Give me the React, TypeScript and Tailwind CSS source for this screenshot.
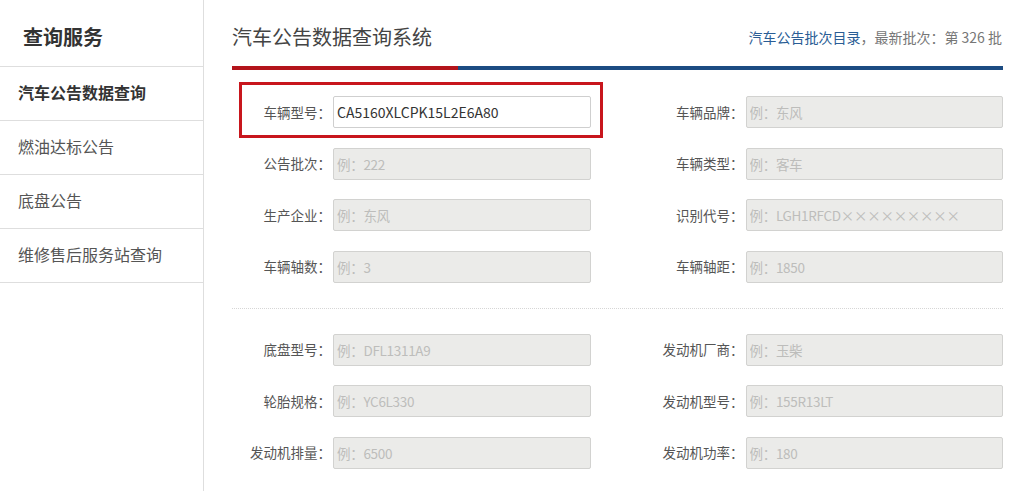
import React from "react";

// Campos do formulário de consulta (label, valor ou exemplo)
interface Field {
  label: string;
  placeholder?: string;
  value?: string;
}

const topFields: Field[] = [
  { label: "车辆型号：", value: "CA5160XLCPK15L2E6A80" },
  { label: "车辆品牌：", placeholder: "例：东风" },
  { label: "公告批次：", placeholder: "例：222" },
  { label: "车辆类型：", placeholder: "例：客车" },
  { label: "生产企业：", placeholder: "例：东风" },
  { label: "识别代号：", placeholder: "例：LGH1RFCD×××××××××" },
  { label: "车辆轴数：", placeholder: "例：3" },
  { label: "车辆轴距：", placeholder: "例：1850" },
];

const bottomFields: Field[] = [
  { label: "底盘型号：", placeholder: "例：DFL1311A9" },
  { label: "发动机厂商：", placeholder: "例：玉柴" },
  { label: "轮胎规格：", placeholder: "例：YC6L330" },
  { label: "发动机型号：", placeholder: "例：155R13LT" },
  { label: "发动机排量：", placeholder: "例：6500" },
  { label: "发动机功率：", placeholder: "例：180" },
];

const menu = ["汽车公告数据查询", "燃油达标公告", "底盘公告", "维修售后服务站查询"];

const FieldRow: React.FC<{ field: Field; highlight?: boolean }> = ({ field, highlight }) => (
  <div className="relative flex h-[32px] items-center">
    <label className="w-[101px] shrink-0 pr-[2px] text-right text-[13.5px] text-[#555]">
      {field.label}
    </label>
    {field.value !== undefined ? (
      <input
        readOnly
        value={field.value}
        className="h-[32px] w-full rounded-[2px] border border-[#cfcfcf] bg-white px-[3px] text-[14px] text-[#333] outline-none"
      />
    ) : (
      <input
        readOnly
        placeholder={field.placeholder}
        className="h-[32px] w-full rounded-[2px] border border-[#d2d2d0] bg-[#ebebe9] px-[3px] text-[13.5px] tracking-[-0.3px] text-[#333] outline-none placeholder:text-[#bdbdbb]"
      />
    )}
    {highlight && (
      <div className="pointer-events-none absolute top-[-14px] bottom-[-10px] left-[7px] right-[-12px] border-[3px] border-[#c8161d]" />
    )}
  </div>
);

const App: React.FC = () => {
  return (
    <div className="flex h-[491px] w-[1036px] overflow-hidden bg-white font-['Noto_Sans_CJK_SC','Noto_Sans',sans-serif]">
      {/* Menu lateral */}
      <aside className="w-[204px] shrink-0 border-r border-[#dedede]">
        <div className="flex h-[67px] items-center border-b border-[#dedede] pt-[8px] pl-[23px] text-[20px] font-bold text-[#333]">
          查询服务
        </div>
        {menu.map((item, i) => (
          <div
            key={item}
            className={`flex h-[54px] items-center border-b border-[#dedede] pb-[4px] pl-[18px] text-[16px] ${
              i === 0 ? "font-bold text-[#333]" : "text-[#555]"
            }`}
          >
            {item}
          </div>
        ))}
      </aside>

      {/* Conteúdo principal */}
      <main className="flex-1 pl-[28px] pr-[33px]">
        <div className="flex h-[66px] items-center justify-between pt-[8px]">
          <h1 className="text-[20px] font-normal text-[#444]">汽车公告数据查询系统</h1>
          <p className="pr-[1px] text-[14px] text-[#777]">
            <span className="text-[#2a5d95]">汽车公告批次目录</span>，最新批次：第 326 批
          </p>
        </div>
        <div className="flex h-[4px]">
          <div className="w-[226px] bg-[#b3141b]" />
          <div className="flex-1 bg-[#1c4c82]" />
        </div>

        <div className="mt-[26px] grid grid-cols-2 gap-x-[54px] gap-y-[19.5px]">
          {topFields.map((f, i) => (
            <FieldRow key={f.label} field={f} highlight={i === 0} />
          ))}
        </div>

        <div className="mt-[25px] border-t border-dotted border-[#d6d6d6]" />

        <div className="mt-[25px] grid grid-cols-2 gap-x-[54px] gap-y-[19.5px]">
          {bottomFields.map((f) => (
            <FieldRow key={f.label} field={f} />
          ))}
        </div>
      </main>
    </div>
  );
};

export default App;
